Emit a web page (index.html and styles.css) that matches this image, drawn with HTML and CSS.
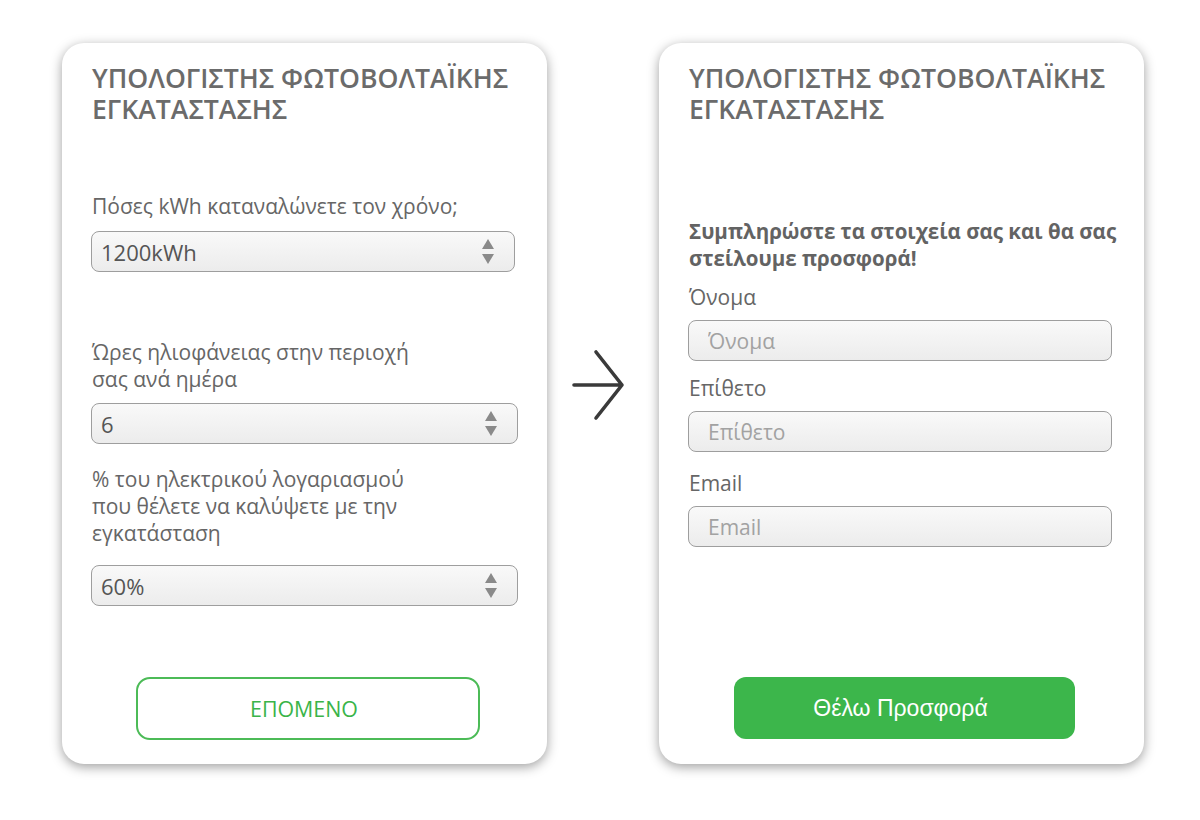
FILE: index.html
```html
<!DOCTYPE html>
<html lang="el">
<head>
<meta charset="utf-8">
<title>Υπολογιστής</title>
<link rel="stylesheet" href="styles.css">
</head>
<body>
<div class="page">
  <section class="card">
    <h1 class="title">ΥΠΟΛΟΓΙΣΤΗΣ ΦΩΤΟΒΟΛΤΑΪΚΗΣ ΕΓΚΑΤΑΣΤΑΣΗΣ</h1>
    <div class="field field-1">
      <div class="label">Πόσες kWh καταναλώνετε τον χρόνο;</div>
      <div class="select select-narrow">
        <span>1200kWh</span>
        <svg class="spin" width="12" height="26" viewBox="0 0 12 26"><path d="M6 0 L12 10 L0 10 Z" fill="#8a8a8a"/><path d="M0 15 L12 15 L6 25 Z" fill="#8a8a8a"/></svg>
      </div>
    </div>
    <div class="field field-2">
      <div class="label">Ώρες ηλιοφάνειας στην περιοχή<br>σας ανά ημέρα</div>
      <div class="select">
        <span>6</span>
        <svg class="spin" width="12" height="26" viewBox="0 0 12 26"><path d="M6 0 L12 10 L0 10 Z" fill="#8a8a8a"/><path d="M0 15 L12 15 L6 25 Z" fill="#8a8a8a"/></svg>
      </div>
    </div>
    <div class="field field-3">
      <div class="label">% του ηλεκτρικού λογαριασμού<br>που θέλετε να καλύψετε με την<br>εγκατάσταση</div>
      <div class="select">
        <span>60%</span>
        <svg class="spin" width="12" height="26" viewBox="0 0 12 26"><path d="M6 0 L12 10 L0 10 Z" fill="#8a8a8a"/><path d="M0 15 L12 15 L6 25 Z" fill="#8a8a8a"/></svg>
      </div>
    </div>
    <button class="btn-outline">ΕΠΟΜΕΝΟ</button>
  </section>

  <div class="arrow">
    <svg width="56" height="72" viewBox="0 0 56 72"><path d="M4 36 H52 M26 3 L52 36 L26 69" fill="none" stroke="#3a3a3a" stroke-width="3.6" stroke-linecap="round" stroke-linejoin="round"/></svg>
  </div>

  <section class="card">
    <h1 class="title">ΥΠΟΛΟΓΙΣΤΗΣ ΦΩΤΟΒΟΛΤΑΪΚΗΣ ΕΓΚΑΤΑΣΤΑΣΗΣ</h1>
    <p class="lead">Συμπληρώστε τα στοιχεία σας και θα σας<br>στείλουμε προσφορά!</p>
    <label class="label in-label">Όνομα</label>
    <input class="input" type="text" placeholder="Όνομα">
    <label class="label in-label gap-2">Επίθετο</label>
    <input class="input" type="text" placeholder="Επίθετο">
    <label class="label in-label gap-3">Email</label>
    <input class="input" type="text" placeholder="Email">
    <button class="btn-fill">Θέλω Προσφορά</button>
  </section>
</div>
</body>
</html>
```

FILE: styles.css
```css
* { box-sizing: border-box; }
html, body { margin: 0; padding: 0; background: #ffffff; }
body { font-family: "Open Sans", "DejaVu Sans", sans-serif; width: 1200px; height: 820px; overflow: hidden; }

.page {
  display: flex;
  align-items: flex-start;
  padding: 43px 0 0 62px;
}

.card {
  width: 485px;
  height: 721px;
  background: #ffffff;
  border-radius: 22px;
  box-shadow: 0 3px 12px rgba(0, 0, 0, 0.38);
  padding: 20px 29px 0 29px;
  display: flex;
  flex-direction: column;
}

.title {
  margin: 0 0 0 1px;
  font-size: 26.6px;
  line-height: 31px;
  font-weight: 600;
  color: #6b6b6b;
  width: 440px;
}

.label {
  font-size: 21px;
  line-height: 27px;
  color: #666666;
  margin-left: 1px;
  white-space: nowrap;
}

.field { display: flex; flex-direction: column; }
.field-1 { margin-top: 68px; }
.field-1 .label { margin-bottom: 11px; }
.field-2 { margin-top: 67px; }
.field-2 .label { margin-bottom: 10px; }
.field-3 { margin-top: 22px; }
.field-3 .label { margin-bottom: 18px; }

.select {
  height: 41px;
  border: 1px solid #9e9e9e;
  border-radius: 8px;
  background: linear-gradient(#f9f9f9, #ececec);
  display: flex;
  align-items: center;
  justify-content: space-between;
  padding: 0 20px 0 9px;
  font-size: 22px;
  color: #555555;
}
.select-narrow { width: 424px; }
.spin { display: block; }

.btn-outline {
  margin: auto 0 24px 45px;
  width: 344px;
  height: 63px;
  border: 2px solid #4cbb57;
  border-radius: 14px;
  background: #ffffff;
  color: #3ab449;
  font-family: "Open Sans", sans-serif;
  font-size: 21.4px;
  padding: 0 8px 0 0;
  cursor: pointer;
}

.arrow {
  width: 112px;
  display: flex;
  justify-content: flex-start;
  padding: 306px 0 0 23px;
}

.lead {
  margin: 93px 0 0 1px;
  font-size: 20.5px;
  line-height: 27px;
  font-weight: 700;
  color: #636363;
  white-space: nowrap;
}

.in-label { margin-top: 12px; margin-bottom: 9px; }
.gap-2 { margin-top: 14px; margin-bottom: 9px; }
.gap-3 { margin-top: 18px; margin-bottom: 9px; }

.input {
  width: 424px;
  height: 41px;
  border: 1px solid #9e9e9e;
  border-radius: 8px;
  background: linear-gradient(#f9f9f9, #ececec);
  padding: 0 19px;
  font-family: "Open Sans", sans-serif;
  font-size: 21px;
  color: #555555;
  outline: none;
}
.input::placeholder { color: #a2a2a2; }

.btn-fill {
  margin: auto 0 25px 46px;
  width: 341px;
  height: 62px;
  border: none;
  border-radius: 12px;
  background: #3cb64b;
  color: #ffffff;
  font-family: "Liberation Sans", Arial, sans-serif;
  font-size: 23px;
  padding: 0 8px 0 0;
  cursor: pointer;
}
```
